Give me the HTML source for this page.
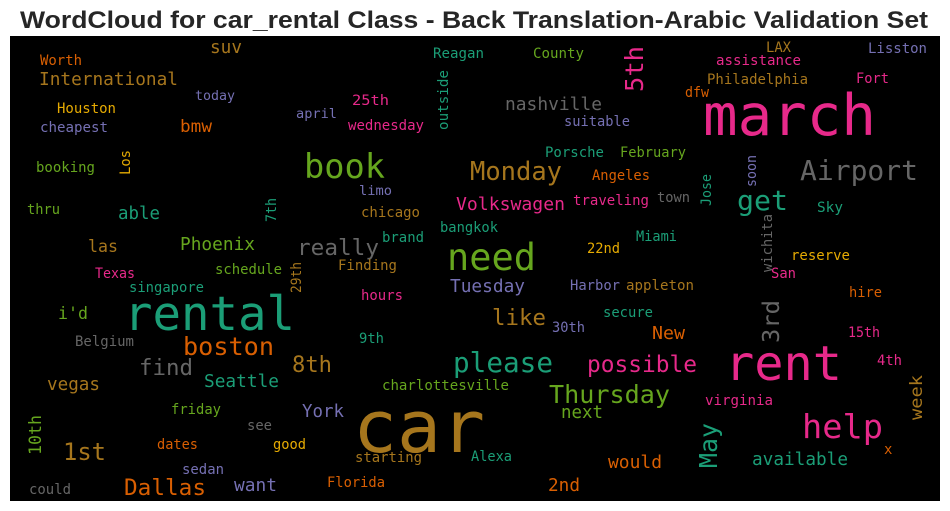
<!DOCTYPE html>
<html><head><meta charset="utf-8"><style>
html,body{margin:0;padding:0;background:#fff;width:950px;height:511px;overflow:hidden}
svg{display:block}
text{font-family:"DejaVu Sans Mono","Liberation Mono",monospace}
.t{font-family:"Liberation Sans",Arial,sans-serif;font-weight:bold}
.a{fill:#1b9e77}.o{fill:#d95f02}.p{fill:#7570b3}.k{fill:#e7298a}.g{fill:#66a61e}.y{fill:#e6ab02}.b{fill:#a6761d}.r{fill:#666666}
</style></head><body>
<svg width="950" height="511" viewBox="0 0 950 511" xmlns="http://www.w3.org/2000/svg">
<text class="t" x="474" y="28" font-size="24" text-anchor="middle" fill="#262626" textLength="908" lengthAdjust="spacingAndGlyphs">WordCloud for car_rental Class - Back Translation-Arabic Validation Set</text>
<rect x="10" y="36" width="930" height="465" fill="#000"/>
<g>
<text class="b" x="353" y="452" font-size="72" textLength="132" lengthAdjust="spacingAndGlyphs">car</text>
<text class="a" x="124" y="330" font-size="47" textLength="171" lengthAdjust="spacingAndGlyphs">rental</text>
<text class="k" x="703" y="135" font-size="57" textLength="173" lengthAdjust="spacingAndGlyphs">march</text>
<text class="k" x="725" y="380" font-size="48" textLength="117" lengthAdjust="spacingAndGlyphs">rent</text>
<text class="g" x="447" y="270" font-size="37" textLength="89" lengthAdjust="spacingAndGlyphs">need</text>
<text class="g" x="304" y="178" font-size="34" textLength="81" lengthAdjust="spacingAndGlyphs">book</text>
<text class="r" x="800" y="180" font-size="28" textLength="118" lengthAdjust="spacingAndGlyphs">Airport</text>
<text class="k" x="802" y="438" font-size="33" textLength="81" lengthAdjust="spacingAndGlyphs">help</text>
<text class="a" x="737" y="210" font-size="28" textLength="51" lengthAdjust="spacingAndGlyphs">get</text>
<text class="b" x="470" y="180" font-size="26" textLength="92" lengthAdjust="spacingAndGlyphs">Monday</text>
<text class="a" x="453" y="372" font-size="28" textLength="100" lengthAdjust="spacingAndGlyphs">please</text>
<text class="g" x="549" y="403" font-size="25" textLength="121" lengthAdjust="spacingAndGlyphs">Thursday</text>
<text class="o" x="183" y="355" font-size="25" textLength="91" lengthAdjust="spacingAndGlyphs">boston</text>
<text class="k" x="587" y="372" font-size="23" textLength="110" lengthAdjust="spacingAndGlyphs">possible</text>
<text class="r" x="297" y="255" font-size="22.5" textLength="82" lengthAdjust="spacingAndGlyphs">really</text>
<text class="k" x="456" y="210" font-size="18" textLength="109" lengthAdjust="spacingAndGlyphs">Volkswagen</text>
<text class="o" x="124" y="495" font-size="22.5" textLength="82" lengthAdjust="spacingAndGlyphs">Dallas</text>
<text class="r" x="139" y="375" font-size="22.5" textLength="54" lengthAdjust="spacingAndGlyphs">find</text>
<text class="b" x="292" y="372" font-size="22" textLength="40" lengthAdjust="spacingAndGlyphs">8th</text>
<text class="b" x="63" y="460" font-size="24" textLength="43" lengthAdjust="spacingAndGlyphs">1st</text>
<text class="b" x="492" y="325" font-size="22.5" textLength="54" lengthAdjust="spacingAndGlyphs">like</text>
<text class="p" x="450" y="292" font-size="18" textLength="75" lengthAdjust="spacingAndGlyphs">Tuesday</text>
<text class="r" x="505" y="110" font-size="18" textLength="97" lengthAdjust="spacingAndGlyphs">nashville</text>
<text class="b" x="39" y="85" font-size="18" textLength="139" lengthAdjust="spacingAndGlyphs">International</text>
<text class="a" x="204" y="387" font-size="18" textLength="75" lengthAdjust="spacingAndGlyphs">Seattle</text>
<text class="b" x="47" y="390" font-size="18" textLength="53" lengthAdjust="spacingAndGlyphs">vegas</text>
<text class="g" x="180" y="250" font-size="18" textLength="75" lengthAdjust="spacingAndGlyphs">Phoenix</text>
<text class="a" x="752" y="465" font-size="18" textLength="96" lengthAdjust="spacingAndGlyphs">available</text>
<text class="o" x="608" y="468" font-size="18" textLength="54" lengthAdjust="spacingAndGlyphs">would</text>
<text class="p" x="234" y="491" font-size="18" textLength="43" lengthAdjust="spacingAndGlyphs">want</text>
<text class="p" x="302" y="417" font-size="17.5" textLength="42" lengthAdjust="spacingAndGlyphs">York</text>
<text class="o" x="548" y="491" font-size="18" textLength="32" lengthAdjust="spacingAndGlyphs">2nd</text>
<text class="g" x="561" y="418" font-size="17.5" textLength="42" lengthAdjust="spacingAndGlyphs">next</text>
<text class="o" x="652" y="339" font-size="18" textLength="33" lengthAdjust="spacingAndGlyphs">New</text>
<text class="a" x="118" y="219" font-size="17.5" textLength="42" lengthAdjust="spacingAndGlyphs">able</text>
<text class="b" x="88" y="252" font-size="17" textLength="30" lengthAdjust="spacingAndGlyphs">las</text>
<text class="b" x="210" y="53" font-size="18" textLength="32" lengthAdjust="spacingAndGlyphs">suv</text>
<text class="o" x="180" y="132" font-size="17" textLength="32" lengthAdjust="spacingAndGlyphs">bmw</text>
<text class="g" x="58" y="319" font-size="17" textLength="30" lengthAdjust="spacingAndGlyphs">i'd</text>
<text class="o" x="40" y="65" font-size="14" textLength="42" lengthAdjust="spacingAndGlyphs">Worth</text>
<text class="y" x="57" y="113" font-size="14" textLength="59" lengthAdjust="spacingAndGlyphs">Houston</text>
<text class="p" x="40" y="132" font-size="14" textLength="68" lengthAdjust="spacingAndGlyphs">cheapest</text>
<text class="g" x="36" y="172" font-size="14" textLength="59" lengthAdjust="spacingAndGlyphs">booking</text>
<text class="g" x="27" y="214" font-size="14" textLength="33" lengthAdjust="spacingAndGlyphs">thru</text>
<text class="p" x="195" y="100" font-size="13.5" textLength="40" lengthAdjust="spacingAndGlyphs">today</text>
<text class="p" x="296" y="118" font-size="13.5" textLength="41" lengthAdjust="spacingAndGlyphs">april</text>
<text class="k" x="352" y="105" font-size="14" textLength="37" lengthAdjust="spacingAndGlyphs">25th</text>
<text class="k" x="348" y="130" font-size="14" textLength="76" lengthAdjust="spacingAndGlyphs">wednesday</text>
<text class="a" x="433" y="58" font-size="14" textLength="51" lengthAdjust="spacingAndGlyphs">Reagan</text>
<text class="g" x="533" y="58" font-size="14" textLength="51" lengthAdjust="spacingAndGlyphs">County</text>
<text class="p" x="359" y="195" font-size="13.5" textLength="33" lengthAdjust="spacingAndGlyphs">limo</text>
<text class="b" x="361" y="217" font-size="14" textLength="59" lengthAdjust="spacingAndGlyphs">chicago</text>
<text class="a" x="382" y="242" font-size="14" textLength="42" lengthAdjust="spacingAndGlyphs">brand</text>
<text class="a" x="440" y="232" font-size="14" textLength="58" lengthAdjust="spacingAndGlyphs">bangkok</text>
<text class="b" x="338" y="270" font-size="14" textLength="59" lengthAdjust="spacingAndGlyphs">Finding</text>
<text class="g" x="215" y="274" font-size="14" textLength="67" lengthAdjust="spacingAndGlyphs">schedule</text>
<text class="k" x="95" y="278" font-size="14" textLength="40" lengthAdjust="spacingAndGlyphs">Texas</text>
<text class="a" x="129" y="292" font-size="14" textLength="75" lengthAdjust="spacingAndGlyphs">singapore</text>
<text class="k" x="361" y="300" font-size="14" textLength="42" lengthAdjust="spacingAndGlyphs">hours</text>
<text class="r" x="75" y="346" font-size="14" textLength="59" lengthAdjust="spacingAndGlyphs">Belgium</text>
<text class="a" x="359" y="343" font-size="14" textLength="25" lengthAdjust="spacingAndGlyphs">9th</text>
<text class="g" x="382" y="390" font-size="14" textLength="127" lengthAdjust="spacingAndGlyphs">charlottesville</text>
<text class="g" x="171" y="414" font-size="14" textLength="50" lengthAdjust="spacingAndGlyphs">friday</text>
<text class="r" x="247" y="430" font-size="14" textLength="25" lengthAdjust="spacingAndGlyphs">see</text>
<text class="o" x="157" y="449" font-size="14" textLength="41" lengthAdjust="spacingAndGlyphs">dates</text>
<text class="y" x="273" y="449" font-size="14" textLength="33" lengthAdjust="spacingAndGlyphs">good</text>
<text class="b" x="355" y="462" font-size="14" textLength="67" lengthAdjust="spacingAndGlyphs">starting</text>
<text class="p" x="182" y="474" font-size="14" textLength="42" lengthAdjust="spacingAndGlyphs">sedan</text>
<text class="r" x="29" y="494" font-size="14" textLength="42" lengthAdjust="spacingAndGlyphs">could</text>
<text class="o" x="327" y="487" font-size="14" textLength="58" lengthAdjust="spacingAndGlyphs">Florida</text>
<text class="a" x="471" y="461" font-size="14" textLength="41" lengthAdjust="spacingAndGlyphs">Alexa</text>
<text class="p" x="570" y="290" font-size="14" textLength="50" lengthAdjust="spacingAndGlyphs">Harbor</text>
<text class="b" x="626" y="290" font-size="14" textLength="68" lengthAdjust="spacingAndGlyphs">appleton</text>
<text class="a" x="603" y="317" font-size="14" textLength="50" lengthAdjust="spacingAndGlyphs">secure</text>
<text class="p" x="552" y="332" font-size="14" textLength="33" lengthAdjust="spacingAndGlyphs">30th</text>
<text class="k" x="705" y="405" font-size="14" textLength="68" lengthAdjust="spacingAndGlyphs">virginia</text>
<text class="k" x="848" y="337" font-size="14" textLength="32" lengthAdjust="spacingAndGlyphs">15th</text>
<text class="k" x="877" y="365" font-size="14" textLength="25" lengthAdjust="spacingAndGlyphs">4th</text>
<text class="o" x="849" y="297" font-size="14" textLength="33" lengthAdjust="spacingAndGlyphs">hire</text>
<text class="o" x="884" y="454" font-size="14">x</text>
<text class="k" x="771" y="278" font-size="14" textLength="25" lengthAdjust="spacingAndGlyphs">San</text>
<text class="y" x="791" y="260" font-size="14" textLength="59" lengthAdjust="spacingAndGlyphs">reserve</text>
<text class="a" x="817" y="212" font-size="14" textLength="26" lengthAdjust="spacingAndGlyphs">Sky</text>
<text class="r" x="657" y="202" font-size="14" textLength="33" lengthAdjust="spacingAndGlyphs">town</text>
<text class="k" x="573" y="205" font-size="14" textLength="76" lengthAdjust="spacingAndGlyphs">traveling</text>
<text class="o" x="592" y="180" font-size="14" textLength="58" lengthAdjust="spacingAndGlyphs">Angeles</text>
<text class="a" x="545" y="157" font-size="14" textLength="59" lengthAdjust="spacingAndGlyphs">Porsche</text>
<text class="g" x="620" y="157" font-size="14" textLength="66" lengthAdjust="spacingAndGlyphs">February</text>
<text class="a" x="636" y="241" font-size="14" textLength="41" lengthAdjust="spacingAndGlyphs">Miami</text>
<text class="y" x="587" y="253" font-size="14" textLength="33" lengthAdjust="spacingAndGlyphs">22nd</text>
<text class="p" x="564" y="126" font-size="14" textLength="66" lengthAdjust="spacingAndGlyphs">suitable</text>
<text class="o" x="685" y="97" font-size="14" textLength="24" lengthAdjust="spacingAndGlyphs">dfw</text>
<text class="b" x="707" y="84" font-size="14" textLength="101" lengthAdjust="spacingAndGlyphs">Philadelphia</text>
<text class="k" x="856" y="83" font-size="14" textLength="33" lengthAdjust="spacingAndGlyphs">Fort</text>
<text class="k" x="716" y="65" font-size="14" textLength="85" lengthAdjust="spacingAndGlyphs">assistance</text>
<text class="b" x="766" y="52" font-size="14" textLength="25" lengthAdjust="spacingAndGlyphs">LAX</text>
<text class="p" x="868" y="53" font-size="14" textLength="59" lengthAdjust="spacingAndGlyphs">Lisston</text>
<text class="a" font-size="25" transform="translate(717,468) rotate(-90)" textLength="45" lengthAdjust="spacingAndGlyphs">May</text>
<text class="r" font-size="23" transform="translate(779,343) rotate(-90)" textLength="43" lengthAdjust="spacingAndGlyphs">3rd</text>
<text class="k" font-size="25" transform="translate(643,92) rotate(-90)" textLength="46" lengthAdjust="spacingAndGlyphs">5th</text>
<text class="g" font-size="17" transform="translate(41,455) rotate(-90)" textLength="40" lengthAdjust="spacingAndGlyphs">10th</text>
<text class="b" font-size="17" transform="translate(922,420) rotate(-90)" textLength="45" lengthAdjust="spacingAndGlyphs">week</text>
<text class="a" font-size="14" transform="translate(448,130) rotate(-90)" textLength="60" lengthAdjust="spacingAndGlyphs">outside</text>
<text class="y" font-size="14" transform="translate(130,175) rotate(-90)" textLength="25" lengthAdjust="spacingAndGlyphs">Los</text>
<text class="a" font-size="14" transform="translate(276,222) rotate(-90)" textLength="24" lengthAdjust="spacingAndGlyphs">7th</text>
<text class="b" font-size="14" transform="translate(301,293) rotate(-90)" textLength="31" lengthAdjust="spacingAndGlyphs">29th</text>
<text class="r" font-size="14" transform="translate(772,272) rotate(-90)" textLength="58" lengthAdjust="spacingAndGlyphs">wichita</text>
<text class="p" font-size="14" transform="translate(756,187) rotate(-90)" textLength="32" lengthAdjust="spacingAndGlyphs">soon</text>
<text class="a" font-size="14" transform="translate(711,206) rotate(-90)" textLength="32" lengthAdjust="spacingAndGlyphs">Jose</text>
</g>
</svg>
</body></html>
